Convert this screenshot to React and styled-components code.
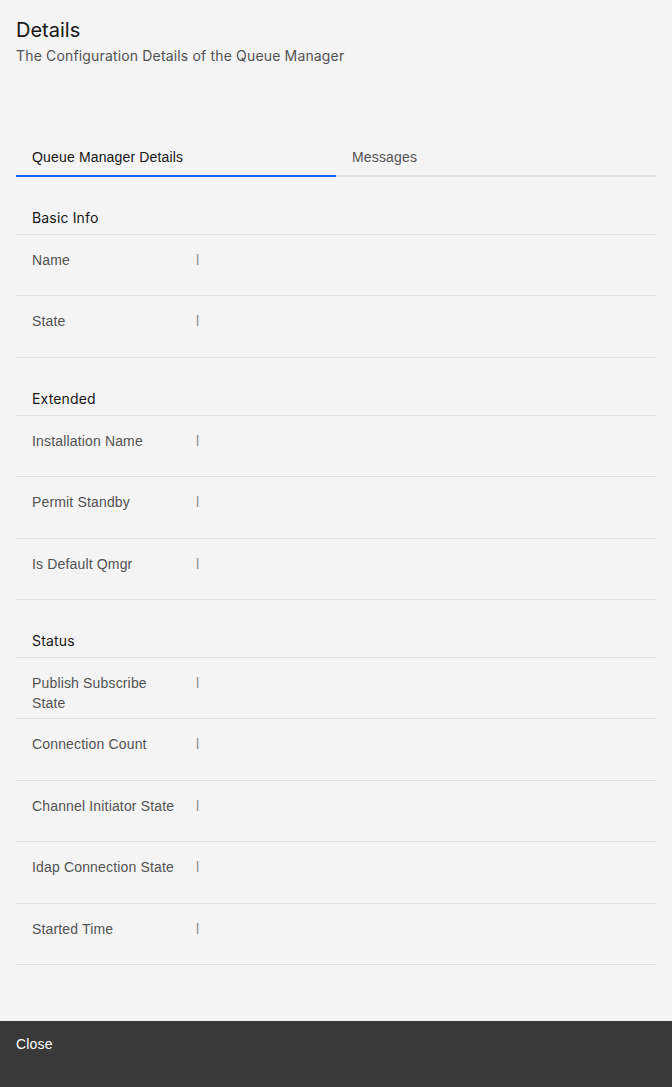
import React from 'react';
import styled, { createGlobalStyle } from 'styled-components';

const GlobalStyle = createGlobalStyle`
    html, body {
        margin: 0;
        padding: 0;
        background: #f4f4f4;
    }
    * {
        box-sizing: border-box;
    }
`

const Page = styled.div`
    display: flex;
    flex-direction: column;
    min-height: 100vh;
    background: #f4f4f4;
`
const Content = styled.div`
    flex: 1;
    padding: 16px 16px 0 16px;
`
const Title = styled.h2`
    margin: 0;
    font-family: Inter, "Noto Sans", sans-serif;
    font-weight: 400;
    font-size: 20px;
    line-height: 28px;
    color: #161616;
`
const Subtitle = styled.p`
    margin: 2px 0 0 0;
    font-family: Inter, "Noto Sans", sans-serif;
    font-size: 14px;
    line-height: 20px;
    letter-spacing: 0.16px;
    color: #525252;
`
const Tabs = styled.div`
    display: grid;
    grid-template-columns: 1fr 1fr;
    margin-top: 71px;
`
const Tab = styled.div`
    padding: 11px 16px 9px 16px;
    font-family: "Liberation Sans", Arial, sans-serif;
    font-size: 14px;
    line-height: 18px;
    letter-spacing: 0.16px;
    color: ${p => (p.$active ? '#161616' : '#525252')};
    border-bottom: 2px solid ${p => (p.$active ? '#0f62fe' : '#e0e0e0')};
`
const SectionHead = styled.div`
    height: 58px;
    padding: 32px 16px 7px 16px;
    font-family: Inter, "Noto Sans", sans-serif;
    font-size: 14px;
    line-height: 18px;
    letter-spacing: 0.16px;
    color: #161616;
    border-bottom: 1px solid #e0e0e0;
`
const Row = styled.div`
    display: grid;
    grid-template-columns: 180px 1fr;
    align-items: start;
    height: 61.4px;
    padding-top: 15px;
    border-bottom: 1px solid #e0e0e0;
    font-family: "Liberation Sans", Arial, sans-serif;
    font-size: 14px;
    line-height: 20px;
    letter-spacing: 0.16px;
`
const Label = styled.div`
    padding: 0 16px;
    color: #525252;
`
const Value = styled.div`
    padding: 0 16px 0 0;
    color: #8d8d8d;
`
const Footer = styled.div`
    height: 66px;
    background: #393939;
    padding: 14px 16px;
    font-family: "Liberation Sans", Arial, sans-serif;
    font-size: 14px;
    line-height: 18px;
    letter-spacing: 0.16px;
    color: #ffffff;
`

const sections = [
    { title: 'Basic Info', rows: ['Name', 'State'] },
    { title: 'Extended', rows: ['Installation Name', 'Permit Standby', 'Is Default Qmgr'] },
    {
        title: 'Status',
        rows: [
            'Publish Subscribe State',
            'Connection Count',
            'Channel Initiator State',
            'Idap Connection State',
            'Started Time',
        ],
    },
]

const App = () => {
    return (
        <Page>
            <GlobalStyle />
            <Content>
                <Title>Details</Title>
                <Subtitle>The Configuration Details of the Queue Manager</Subtitle>
                <Tabs>
                    <Tab $active>Queue Manager Details</Tab>
                    <Tab>Messages</Tab>
                </Tabs>
                {sections.map(s => (
                    <div key={s.title}>
                        <SectionHead>{s.title}</SectionHead>
                        {s.rows.map(r => (
                            <Row key={r}>
                                <Label>{r}</Label>
                                <Value>l</Value>
                            </Row>
                        ))}
                    </div>
                ))}
            </Content>
            <Footer>Close</Footer>
        </Page>
    );
};

export default App;
